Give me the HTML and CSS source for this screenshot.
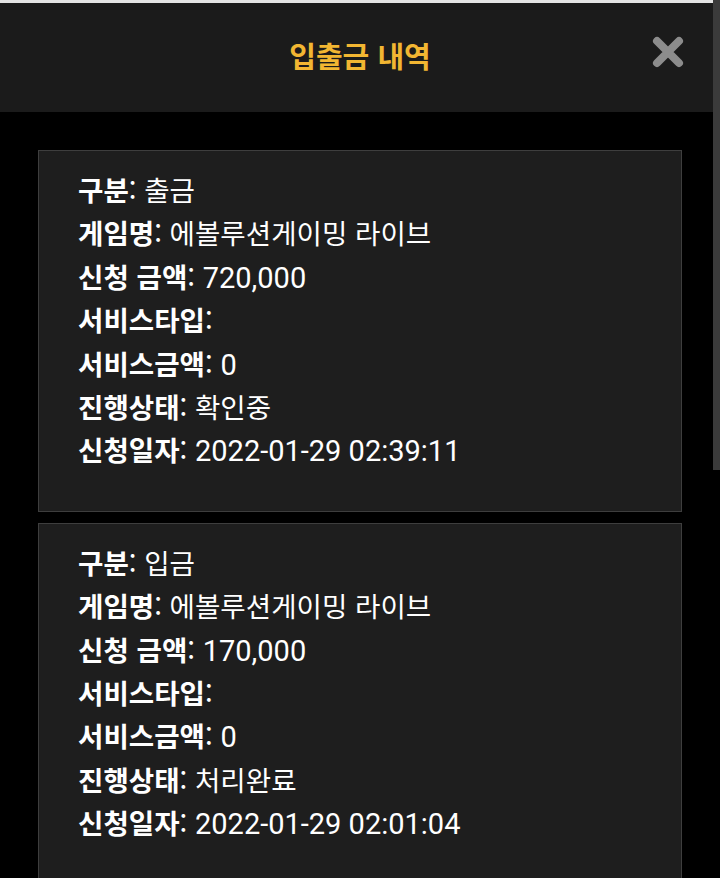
FILE: index.html
```html
<!DOCTYPE html>
<html lang="ko">
<head>
<meta charset="utf-8">
<title>입출금 내역</title>
<link rel="stylesheet" href="styles.css">
</head>
<body>
<div class="topline"></div>
<header class="header">
  <h1 class="title">입출금 내역</h1>
  <button class="close" aria-label="닫기">
    <svg width="32" height="32" viewBox="0 0 32 32"><path d="M5 5 L27 27 M27 5 L5 27" stroke="#8c8c8c" stroke-width="8" stroke-linecap="round" fill="none"/></svg>
  </button>
</header>
<main class="list">
  <section class="card">
    <p class="row"><b>구분</b>: 출금</p>
    <p class="row"><b>게임명</b>: 에볼루션게이밍 라이브</p>
    <p class="row"><b>신청 금액</b>: <span class="num">720,000</span></p>
    <p class="row"><b>서비스타입</b>:</p>
    <p class="row"><b>서비스금액</b>: <span class="num">0</span></p>
    <p class="row"><b>진행상태</b>: 확인중</p>
    <p class="row"><b>신청일자</b>: <span class="num">2022-01-29 02:39:11</span></p>
  </section>
  <section class="card">
    <p class="row"><b>구분</b>: 입금</p>
    <p class="row"><b>게임명</b>: 에볼루션게이밍 라이브</p>
    <p class="row"><b>신청 금액</b>: <span class="num">170,000</span></p>
    <p class="row"><b>서비스타입</b>:</p>
    <p class="row"><b>서비스금액</b>: <span class="num">0</span></p>
    <p class="row"><b>진행상태</b>: 처리완료</p>
    <p class="row"><b>신청일자</b>: <span class="num">2022-01-29 02:01:04</span></p>
  </section>
</main>
<div class="scrollbar"></div>
</body>
</html>
```
FILE: styles.css
```css
html, body {
  margin: 0;
  padding: 0;
  background: #000;
  overflow: hidden;
}
body {
  width: 720px;
  height: 878px;
  position: relative;
  font-family: "Roboto", "Noto Sans CJK KR", sans-serif;
  color: #fff;
}
.topline {
  height: 3px;
  background: #e4e4e4;
}
.header {
  position: relative;
  height: 109px;
  background: #1b1b1b;
  display: flex;
  align-items: center;
  justify-content: center;
}
.title {
  margin: 0 0 6px 0;
  font-family: "Noto Sans CJK KR", sans-serif;
  font-weight: 700;
  font-size: 29px;
  letter-spacing: 0;
  color: #f2b632;
}
.close {
  position: absolute;
  right: 36px;
  top: 33px;
  width: 32px;
  height: 32px;
  padding: 0;
  border: 0;
  background: none;
  display: block;
}
.close svg { display: block; }
.list {
  padding: 38px 38px 0 38px;
  display: flex;
  flex-direction: column;
  gap: 11px;
}
.card {
  background: #1e1e1e;
  border: 1px solid #3e3e3e;
  padding: 17px 20px 39px 39px;
}
.row {
  margin: 0;
  font-family: "Noto Sans CJK KR", sans-serif;
  font-size: 27.6px;
  line-height: 43.4px;
  height: 43.4px;
  white-space: nowrap;
}
.row b { font-weight: 700; }
.num {
  font-family: "Roboto", sans-serif;
  font-size: 29px;
}
.scrollbar {
  position: absolute;
  right: 0;
  top: 0;
  width: 7px;
  height: 470px;
  background: #3b3b3b;
}
```
